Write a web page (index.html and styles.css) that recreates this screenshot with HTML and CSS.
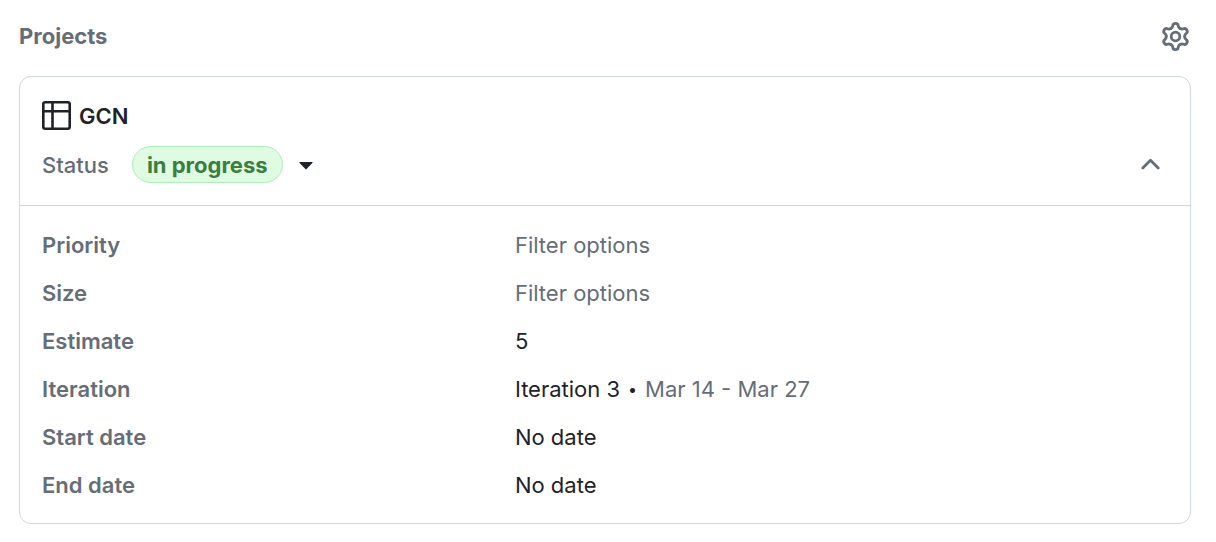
FILE: index.html
```html
<!DOCTYPE html>
<html lang="en">
<head>
<meta charset="utf-8">
<meta name="viewport" content="width=device-width, initial-scale=1">
<title>Projects</title>
<link rel="stylesheet" href="styles.css">
</head>
<body>
<section class="projects">
  <header class="projects-header">
    <h2 class="projects-title">Projects</h2>
    <button class="icon-button" type="button" aria-label="Project settings">
      <svg width="31" height="32" viewBox="0 0 31 32" fill="none" stroke="currentColor" stroke-width="2.8" stroke-linecap="round" aria-hidden="true">
        <defs><path id="tooth" d="M-4.600 -8C-3.300 -8.700 -2.800 -9.700 -2.700 -10.800Q-2.500 -13.100 0 -13.100Q2.500 -13.100 2.700 -10.800C2.800 -9.700 3.300 -8.700 4.600 -8"/></defs>
        <g transform="translate(15.5 16.5)">
          <use href="#tooth"/>
          <use href="#tooth" transform="rotate(60)"/>
          <use href="#tooth" transform="rotate(120)"/>
          <use href="#tooth" transform="rotate(180)"/>
          <use href="#tooth" transform="rotate(240)"/>
          <use href="#tooth" transform="rotate(300)"/>
          <circle r="4.300"/>
        </g>
      </svg>
    </button>
  </header>
  <article class="card">
    <div class="card-header">
      <a class="project-link" href="#">
        <svg width="29" height="30" viewBox="0 0 29 30" fill="none" stroke="currentColor" stroke-width="2.600" aria-hidden="true"><rect x="1.300" y="1.300" width="26.400" height="26.400" rx="2"/><path d="M10.500 1v27M1 10.200h27"/></svg>
        <span>GCN</span>
      </a>
      <div class="status-row">
        <span class="label">Status</span>
        <button class="status-button" type="button" aria-label="Status: in progress">
          <span class="pill">in progress</span>
          <svg width="14" height="10" viewBox="0 0 14 10" fill="currentColor" aria-hidden="true"><path d="M1 2h12q1 0 .4.900L7.600 9q-.6.500-1.200 0L.600 2.900Q0 2 1 2Z"/></svg>
        </button>
        <button class="icon-button collapse" type="button" aria-label="Collapse fields" aria-expanded="true">
          <svg width="20" height="14" viewBox="0 0 20 14" fill="none" stroke="currentColor" stroke-width="2.800" stroke-linecap="round" stroke-linejoin="round" aria-hidden="true"><path d="M2.800 10l7.700-7.700L18.200 10"/></svg>
        </button>
      </div>
    </div>
    <dl class="fields">
      <div class="field"><dt class="label">Priority</dt><dd class="muted">Filter options</dd></div>
      <div class="field"><dt class="label">Size</dt><dd class="muted">Filter options</dd></div>
      <div class="field"><dt class="label">Estimate</dt><dd>5</dd></div>
      <div class="field"><dt class="label">Iteration</dt><dd class="iteration"><span>Iteration 3</span><span class="dot">•</span><span class="muted">Mar 14 - Mar 27</span></dd></div>
      <div class="field"><dt class="label">Start date</dt><dd>No date</dd></div>
      <div class="field"><dt class="label">End date</dt><dd>No date</dd></div>
    </dl>
  </article>
</section>
</body>
</html>
```
FILE: styles.css
```css
* { box-sizing: border-box; }
body {
  margin: 0;
  background: #fff;
  color: #1f2328;
  font: 22px/32px Inter, "Liberation Sans", sans-serif;
}
button {
  padding: 0;
  border: 0;
  background: none;
  color: inherit;
  font: inherit;
  cursor: pointer;
}
svg { display: block; flex: none; }
.projects { padding: 20px 25px 18px 19px; }
.projects-header {
  display: flex;
  justify-content: space-between;
  align-items: center;
  margin-bottom: 24px;
}
.projects-title {
  margin: 0;
  color: #656d76;
  font-size: 22px;
  font-weight: 700;
}
.icon-button { color: #656d76; }
.card {
  border: 1px solid #d0d7de;
  border-radius: 12px;
}
.card-header {
  padding: 23px 22px 22px;
  border-bottom: 1px solid #d0d7de;
}
.project-link {
  display: flex;
  align-items: center;
  gap: 8px;
  width: fit-content;
  color: inherit;
  font-weight: 600;
  text-decoration: none;
}
.status-row {
  display: flex;
  align-items: center;
  margin-top: 14px;
}
.label {
  color: #656d76;
  font-weight: 500;
}
.status-button {
  display: flex;
  align-items: center;
  gap: 16px;
  margin-left: 23px;
}
.pill {
  padding: 2px 14px 1px;
  border: 1px solid #aceebb;
  border-radius: 20px;
  background: #dffbe2;
  color: #39803f;
  font-weight: 700;
}
.collapse { margin-left: auto; padding: 8px; }
.fields {
  display: grid;
  gap: 16px;
  margin: 0;
  padding: 23px 22px 22px;
}
.field {
  display: grid;
  grid-template-columns: 42% 1fr;
}
.field .label { font-weight: 600; }
.field dd { margin: 0; }
.iteration {
  display: flex;
  gap: 8px;
}
.dot { font-size: 16px; }
.muted { color: #656d76; }
```
